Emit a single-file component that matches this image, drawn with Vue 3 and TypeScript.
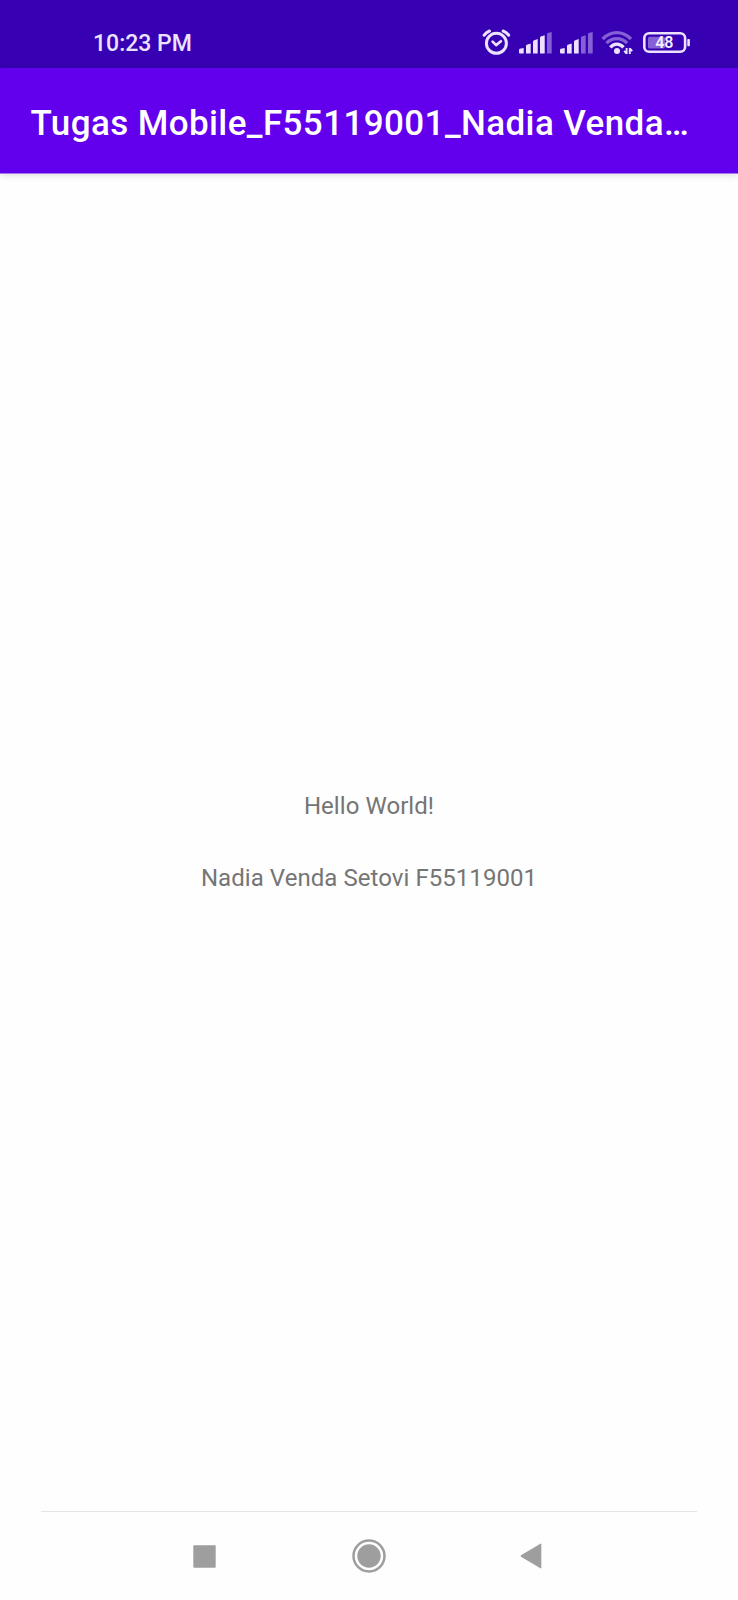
<script setup lang="ts">
const bars: string[] = [
  'M0 18Q0 17 .8 16.8L4.7 16V21.5H1Q0 21.5 0 20.5Z',
  'M7 13.8Q7 13 7.8 12.7L11.7 11.6V21.5H7Z',
  'M14 9.8Q14 9 14.7 8.6L18.7 7V21.5H14Z',
  'M21 5.8Q21 5 21.7 4.6L25.7 3.2V21.5H21Z',
  'M28 2.2Q28 1.4 28.7 1L32.7 0V21.5H28Z',
]
const signals: number[] = [4, 3]
const lines: string[] = ['Hello World!', 'Nadia Venda Setovi F55119001']
</script>

<template>
  <div class="screen">
    <header class="status">
      <span class="time">10:23 PM</span>
      <div class="icons">
        <svg class="alarm" width="30" height="26" viewBox="0 0 30 26" fill="none">
          <circle cx="15.4" cy="14.3" r="10" stroke="#ece2ff" stroke-width="3" />
          <path d="M3.2 6.2Q5.2 3.2 8.4 2M22.2 2Q25.6 3.2 27.6 6.2" stroke="#ece2ff" stroke-width="3.1" stroke-linecap="round" />
          <path d="M11.6 12.6l3.5 3.5 4.8-3.8" stroke="#ece2ff" stroke-width="2.7" stroke-linecap="round" stroke-linejoin="round" />
        </svg>
        <svg v-for="(level, s) in signals" :key="s" class="signal" width="33" height="22" viewBox="0 0 33 22">
          <path v-for="(bar, i) in bars" :key="i" :d="bar" :fill="i < level ? '#ece2ff' : '#8560d6'" />
        </svg>
        <svg class="wifi" width="32" height="25" viewBox="0 0 32 25" fill="none" stroke-width="3.3">
          <path d="M1.6 9Q8 2.7 15.8 2.7T30 9" stroke="#8560d6" />
          <path d="M5.5 13.2Q10 8.6 15.8 8.6T26.1 13.2" stroke="#8560d6" />
          <path d="M9.3 17.4Q12 14.2 15.8 14.2T22.5 17.4" stroke="#ece2ff" />
          <circle cx="16" cy="20.9" r="3" fill="#ece2ff" />
          <path d="M25.6 18v6M25.6 23.6l-2.4-2.8M28.8 24v-6M28.8 18.4l2.4 2.8" stroke="#ece2ff" stroke-width="1.9" />
        </svg>
        <svg class="battery" width="48" height="22" viewBox="0 0 48 22">
          <rect x="1.3" y="1.3" width="40.8" height="18.4" rx="4.8" fill="none" stroke="#ece2ff" stroke-width="2.6" />
          <rect x="5" y="4.8" width="17" height="11.6" rx="1.5" fill="#8560d6" />
          <rect x="44.3" y="7" width="2.6" height="7.2" rx="0.8" fill="#ece2ff" />
          <text x="21.3" y="16.4" text-anchor="middle" class="level">48</text>
        </svg>
      </div>
    </header>
    <div class="appbar">
      <h1 class="title">Tugas Mobile_F55119001_Nadia Venda…</h1>
    </div>
    <main class="content">
      <p v-for="line in lines" :key="line" class="line">{{ line }}</p>
    </main>
    <nav class="nav">
      <svg class="recent" width="23" height="23" viewBox="0 0 23 23"><rect x="0.3" y="0.3" width="22.4" height="22.4" rx="1" fill="#9e9e9e" /></svg>
      <svg class="home" width="34" height="34" viewBox="0 0 34 34">
        <circle cx="17" cy="17" r="15.5" fill="none" stroke="#9e9e9e" stroke-width="2.5" />
        <circle cx="17" cy="17" r="11.7" fill="#9e9e9e" />
      </svg>
      <svg class="back" width="22" height="26" viewBox="0 0 22 26"><path d="M1 12.3L20.4 .7Q21.3 .3 21.3 1.3V24.7Q21.3 25.7 20.4 25.3L1 13.7Q0 13 1 12.3Z" fill="#9e9e9e" /></svg>
    </nav>
  </div>
</template>

<style>
body {
  margin: 0;
  background: #fefefe;
}
</style>

<style scoped>
.screen {
  width: 738px;
  height: 1600px;
  display: flex;
  flex-direction: column;
  background: #fefefe;
  font-family: Roboto, sans-serif;
  overflow: hidden;
}
.status {
  flex: none;
  height: 68px;
  box-sizing: border-box;
  padding: 29px 47px 0 93px;
  display: flex;
  justify-content: space-between;
  align-items: flex-start;
  background: #3700b3;
}
.time {
  margin-top: 1px;
  font-size: 23px;
  font-weight: 500;
  line-height: 28px;
  color: #ece2ff;
  white-space: nowrap;
}
.icons {
  display: flex;
  align-items: flex-start;
}
.alarm {
  margin-right: 8px;
}
.signal {
  margin: 3px 8px 0 0;
}
.wifi {
  margin: 1px 10px 0 0;
}
.battery {
  margin-top: 3px;
}
.level {
  font-size: 16px;
  font-weight: 600;
  fill: #f5eeff;
}
.appbar {
  flex: none;
  box-sizing: border-box;
  height: 106px;
  padding: 7px 0 0 30.5px;
  display: flex;
  align-items: center;
  background: #6200ee;
  border-bottom: 1px solid #a679ee;
  background-clip: padding-box;
  box-shadow: 0 1px 7px rgba(0, 0, 0, 0.14);
}
.title {
  margin: 0;
  font-size: 35px;
  font-weight: 500;
  line-height: 42px;
  letter-spacing: 0.4px;
  color: #fff;
  white-space: nowrap;
}
.content {
  flex: 1;
  padding-top: 618px;
  display: flex;
  flex-direction: column;
  align-items: center;
  gap: 43.5px;
}
.line {
  margin: 0;
  font-size: 24px;
  line-height: 28px;
  letter-spacing: 0.06px;
  color: #757575;
  white-space: nowrap;
}
.nav {
  flex: none;
  height: 88px;
  margin: 0 41px 0 41px;
  padding: 0 155px 0 152px;
  border-top: 1px solid #e4e4e4;
  display: flex;
  justify-content: space-between;
  align-items: center;
}
.home {
  margin-left: 2px;
}
</style>
